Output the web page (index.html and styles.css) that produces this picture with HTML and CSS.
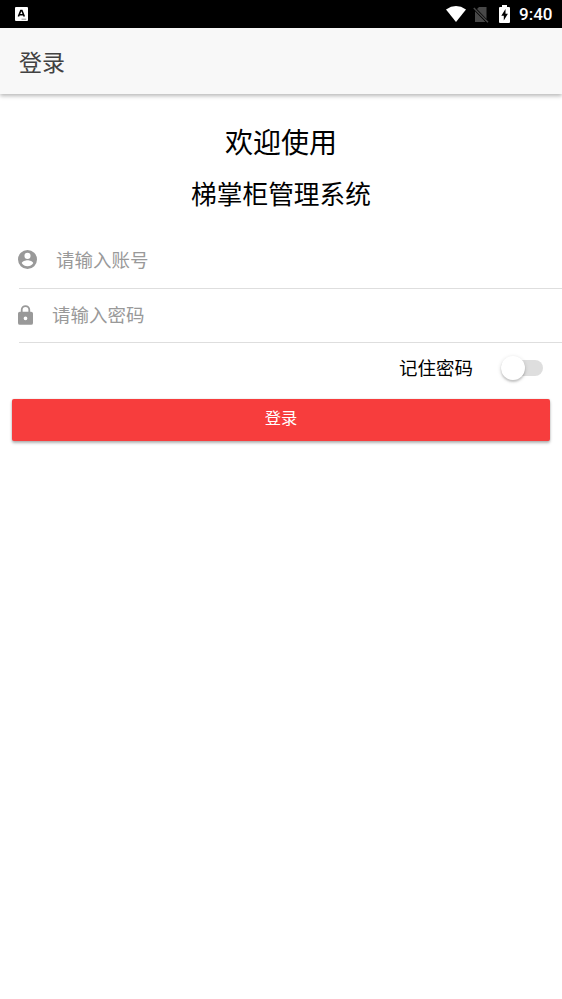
FILE: index.html
```html
<!DOCTYPE html>
<html lang="zh-CN">
<head>
<meta charset="utf-8">
<title>登录</title>
<link rel="stylesheet" href="styles.css">
</head>
<body>
<div class="status">
  <svg class="app-icon" width="13" height="14" viewBox="0 0 13 14"><rect width="13" height="14" rx="1" fill="#fff"/><path d="M3.4 9.5 5.8 3.5h1.1l2.4 6M4.4 7.7h3.9" fill="none" stroke="#000" stroke-width="1.6"/><path d="M6.5 12.2h4.7" stroke="#777" stroke-width=".8"/></svg>
  <div class="indicators">
    <svg class="wifi" width="20" height="16" viewBox="0 0 20 16"><path d="M0 3.4Q10-3.4 20 3.4L10 16Z" fill="#fff"/></svg>
    <svg class="sim" width="16" height="17" viewBox="0 0 16 17"><path d="M6 1H13.5V13L4 3ZM2 5.2 12.5 16H2Z" fill="#484848"/><path d="M.8 2 15 16.2" stroke="#484848" stroke-width="1.5"/></svg>
    <svg class="battery" width="11" height="18" viewBox="0 0 11 18"><path d="M3 0h5v2h2q1 0 1 1v14q0 1-1 1H1q-1 0-1-1V3q0-1 1-1h2Z" fill="#fff"/><path d="M6.5 4 2.3 10.7h2.5V15.5L8.9 8.8H6.5Z" fill="#000"/></svg>
    <span class="clock">9:40</span>
  </div>
</div>
<header class="toolbar">登录</header>
<main>
  <h1>欢迎使用</h1>
  <h2>梯掌柜管理系统</h2>
  <form>
    <label class="field">
      <svg class="user" width="19" height="19" viewBox="0 0 20 20"><path fill="#999" d="M10 0a10 10 0 1 0 0 20 10 10 0 0 0 0-20Zm0 3a3.2 3.2 0 1 1 0 6.4A3.2 3.2 0 0 1 10 3Zm0 14.2a7.2 7.2 0 0 1-6-3.2c0-2 4-3.1 6-3.1s6 1.1 6 3.1a7.2 7.2 0 0 1-6 3.2Z"/></svg>
      <input type="text" placeholder="请输入账号">
    </label>
    <label class="field password">
      <svg class="lock" width="15" height="20" viewBox="0 0 16 21"><path fill="#999" fill-rule="evenodd" d="M14 7h-1V5A5 5 0 0 0 3 5v2H2a2 2 0 0 0-2 2v10a2 2 0 0 0 2 2h12a2 2 0 0 0 2-2V9a2 2 0 0 0-2-2ZM4.9 5a3.1 3.1 0 0 1 6.2 0v2H4.9ZM8 16a2 2 0 1 1 0-4 2 2 0 0 1 0 4Z"/></svg>
      <input type="password" placeholder="请输入密码">
    </label>
    <div class="remember">
      <span class="caption">记住密码</span>
      <span class="toggle"><span class="knob"></span></span>
    </div>
    <button type="button">登录</button>
  </form>
</main>
</body>
</html>
```
FILE: styles.css
```css
* { box-sizing: border-box; }
body {
  margin: 0;
  min-height: 999px;
  background: #fff;
  color: #000;
  font-family: "Noto Sans CJK SC", sans-serif;
}
svg { display: block; flex: none; }
.status {
  height: 28px;
  padding: 0 9.5px 0 15px;
  display: flex;
  align-items: center;
  justify-content: space-between;
  background: #000;
}
.indicators { display: flex; align-items: center; height: 28px; }
.wifi { margin-right: 7px; }
.sim { margin-right: 10px; }
.battery { margin: 0 9px 1px 0; }
.clock {
  color: #fff;
  font: 500 17px/28px Roboto, sans-serif;
}
.toolbar {
  height: 66px;
  padding: 0 19px;
  background: #f8f8f8;
  color: #424242;
  font-size: 23px;
  line-height: 66px;
  box-shadow: 0 2px 4px rgba(0, 0, 0, .28);
}
h1, h2 { margin: 0; font-weight: 400; text-align: center; }
h1 { padding-top: 26px; font-size: 28px; line-height: 42px; }
h2 { margin-top: 11px; font-size: 25.7px; line-height: 40px; }
form { padding-top: 21px; }
.field {
  display: flex;
  align-items: center;
  height: 55px;
  margin-left: 19px;
  padding-bottom: 3px;
  border-bottom: 1px solid #dedede;
}
.password { height: 54px; }
.user, .lock { margin-left: -1px; }
.lock { margin-top: 1px; }
input {
  width: 300px;
  height: 40px;
  margin: 0 0 2px 19px;
  padding: 0;
  border: 0;
  outline: 0;
  background: transparent;
  font: 18.5px/40px "Noto Sans CJK SC", sans-serif;
}
.password input { margin-bottom: 1px; }
input::placeholder { color: #999; opacity: 1; }
.remember {
  display: flex;
  align-items: center;
  justify-content: flex-end;
  height: 56px;
  padding: 0 19px 6px 0;
  font-size: 18.5px;
}
.caption { margin-bottom: 2px; }
.toggle {
  display: flex;
  align-items: center;
  width: 42px;
  height: 16px;
  margin-left: 28px;
  border-radius: 8px;
  background: #dedede;
}
.knob {
  flex: none;
  width: 24px;
  height: 24px;
  border-radius: 50%;
  background: #fff;
  box-shadow: 0 2px 2px rgba(0, 0, 0, .16), 0 1px 4px rgba(0, 0, 0, .15);
}
button {
  display: block;
  width: 538px;
  height: 42px;
  margin: 0 12px;
  padding: 0 0 6px;
  border: 0;
  border-radius: 2px;
  background: #f73d3d;
  color: #fff;
  font: 16.3px/36px "Noto Sans CJK SC", sans-serif;
  box-shadow: 0 2px 3px rgba(0, 0, 0, .3), 0 0 2px rgba(0, 0, 0, .12);
}
```
